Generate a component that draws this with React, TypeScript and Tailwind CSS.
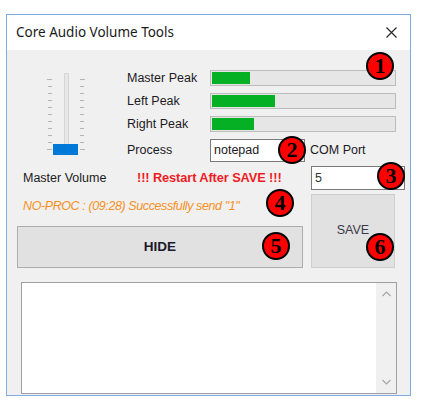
import React from "react";

const Badge = ({ n, x, y }: { n: number; x: number; y: number }) => (
  <div
    className="absolute w-[28px] h-[28px] rounded-full bg-[#ff0000] border-2 border-black flex items-center justify-center text-black font-bold text-[22px] leading-none"
    style={{ left: x - 14, top: y - 14, fontFamily: '"Liberation Serif", serif' }}
  >
    {n}
  </div>
);

const Bar = ({ w }: { w: number }) => (
  <div className="h-[16px] w-[186px] bg-[#e6e6e6] border border-[#bcbcbc] p-px">
    <div className="h-full bg-[#06b025]" style={{ width: w }} />
  </div>
);

const Slider = () => {
  const ticks = Array.from({ length: 11 }, (_, i) => 7 + i * 7);
  return (
    <svg width="45" height="86" viewBox="0 0 45 86">
      {ticks.map((t, i) => (
        <g key={i} stroke="#b4b4b4" strokeWidth="1">
          <line x1={i === 0 || i === 10 ? 3 : 4} y1={t + 0.5} x2="8" y2={t + 0.5} />
          <line x1="36" y1={t + 0.5} x2={i === 0 || i === 10 ? 41 : 40} y2={t + 0.5} />
        </g>
      ))}
      <rect x="20.5" y="1.5" width="4" height="81" fill="#e7e7e7" stroke="#d6d6d6" />
      <rect x="9" y="72" width="25" height="11" fill="#0078d7" />
    </svg>
  );
};

export default function App() {
  const sans = { fontFamily: '"Liberation Sans", Arial, sans-serif' };
  return (
    <div className="relative w-[424px] h-[404px] bg-white pt-[14px] pl-[6px]" style={sans}>
      <div className="w-[405px] h-[382px] border border-[#7aaee0] flex flex-col">
        <div className="h-[35px] bg-white flex items-center justify-between pl-[9px] pr-[13px] shrink-0">
          <span className="text-[13.5px] text-[#1a1a1a]" style={{ fontFamily: '"Noto Sans", "Open Sans", sans-serif' }}>
            Core Audio Volume Tools
          </span>
          <svg width="11" height="11" viewBox="0 0 11 11">
            <path d="M0.5 0.5 L10.5 10.5 M10.5 0.5 L0.5 10.5" stroke="#222" strokeWidth="1.1" />
          </svg>
        </div>
        <div className="flex-1 bg-[#f0f0f0] flex flex-col text-[12.5px] text-[#1c1a24]">
          {/* top section */}
          <div className="flex items-start pt-[20px]">
            <div className="ml-[37px] mt-[2px]">
              <Slider />
            </div>
            <div className="ml-[38px] grid grid-cols-[83px_auto] gap-y-[7px] items-center">
              <span className="leading-none">Master Peak</span>
              <Bar w={38} />
              <span className="leading-none">Left Peak</span>
              <Bar w={63} />
              <span className="leading-none">Right Peak</span>
              <Bar w={42} />
              <span className="leading-none">Process</span>
              <div className="flex items-center">
                <div className="w-[95px] h-[23px] bg-white border border-[#7a7a7a] flex items-center pl-[3px]">
                  notepad
                </div>
                <span className="ml-[5px]">COM Port</span>
              </div>
            </div>
          </div>
          {/* lower section */}
          <div className="flex mt-[4px] ml-[10px]">
            <div className="w-[286px] flex flex-col">
              <div className="h-[24px] flex items-center pl-[6px]">
                <span className="w-[114px]">Master Volume</span>
                <span className="text-[#f01c24] font-bold text-[12.8px] tracking-[-0.1px]">!!! Restart After SAVE !!!</span>
              </div>
              <div className="h-[24px] mt-[4px] flex items-center pl-[6px]">
                <span className="text-[#f7901e] italic text-[12.5px] tracking-[-0.4px]">
                  NO-PROC : (09:28) Successfully send "1"
                </span>
              </div>
              <div className="mt-[8px] h-[42px] bg-[#e1e1e1] border border-[#adadad] flex items-center justify-center font-bold text-[13.5px] text-[#1a1a2a]">
                HIDE
              </div>
            </div>
            <div className="ml-[8px] flex flex-col">
              <div className="w-[94px] h-[24px] bg-white border border-[#7a7a7a] flex items-center pl-[3px] text-[#333]">
                5
              </div>
              <div className="mt-[4px] w-[84px] h-[74px] bg-[#e1e1e1] border border-[#cfcfcf] flex items-center justify-center pb-[2px] text-[12.5px] text-[#3a3a4a]">
                SAVE
              </div>
            </div>
          </div>
          {/* text area */}
          <div className="ml-[14px] mt-[14px] w-[376px] h-[112px] bg-white border border-[#a0a0a0] flex">
            <div className="flex-1" />
            <div className="w-[20px] bg-[#f0f0f0] flex flex-col items-center justify-between py-[8px]">
              <svg width="9" height="6" viewBox="0 0 9 6">
                <path d="M0.5 5 L4.5 1 L8.5 5" stroke="#a6a6a6" fill="none" strokeWidth="1.2" />
              </svg>
              <svg width="9" height="6" viewBox="0 0 9 6">
                <path d="M0.5 1 L4.5 5 L8.5 1" stroke="#a6a6a6" fill="none" strokeWidth="1.2" />
              </svg>
            </div>
          </div>
        </div>
      </div>
      <Badge n={1} x={380} y={66} />
      <Badge n={2} x={292} y={150} />
      <Badge n={3} x={391} y={176} />
      <Badge n={4} x={280} y={203} />
      <Badge n={5} x={276} y={246} />
      <Badge n={6} x={380} y={247} />
    </div>
  );
}
